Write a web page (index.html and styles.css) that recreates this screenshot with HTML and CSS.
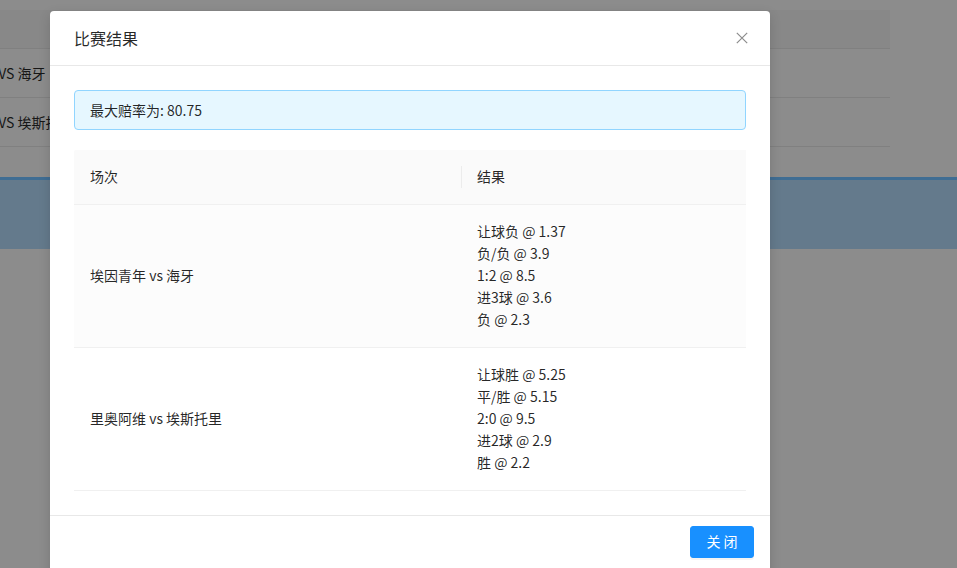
FILE: index.html
```html
<!DOCTYPE html>
<html lang="zh">
<head>
<meta charset="utf-8">
<title>比赛结果</title>
<link rel="stylesheet" href="styles.css">
</head>
<body>
<div class="page">
  <div class="bg-table">
    <div class="bg-row bg-head"><span></span></div>
    <div class="bg-row"><span class="bg-cell">埃因青年 VS 海牙</span></div>
    <div class="bg-row"><span class="bg-cell">里奥阿维 VS 埃斯托里</span></div>
  </div>
  <div class="bg-band"></div>
</div>

<div class="modal">
  <div class="modal-header">
    <div class="modal-title">比赛结果</div>
    <button class="modal-close" aria-label="Close">
      <svg width="12" height="12" viewBox="0 0 12 12"><path d="M0.8 0.8 L11.2 11.2 M11.2 0.8 L0.8 11.2" stroke="#8c8c8c" stroke-width="1.2" fill="none"/></svg>
    </button>
  </div>
  <div class="modal-body">
    <div class="alert">最大赔率为: 80.75</div>
    <table class="result-table">
      <thead>
        <tr><th class="col-match">场次</th><th class="col-result">结果</th></tr>
      </thead>
      <tbody>
        <tr class="hover">
          <td>埃因青年 vs 海牙</td>
          <td><div>让球负 @ 1.37</div><div>负/负 @ 3.9</div><div>1:2 @ 8.5</div><div>进3球 @ 3.6</div><div>负 @ 2.3</div></td>
        </tr>
        <tr>
          <td>里奥阿维 vs 埃斯托里</td>
          <td><div>让球胜 @ 5.25</div><div>平/胜 @ 5.15</div><div>2:0 @ 9.5</div><div>进2球 @ 2.9</div><div>胜 @ 2.2</div></td>
        </tr>
      </tbody>
    </table>
  </div>
  <div class="modal-footer">
    <button class="btn-primary">关 闭</button>
  </div>
</div>
</body>
</html>
```

FILE: styles.css
```css
* { box-sizing: border-box; }
html, body {
  margin: 0;
  padding: 0;
  width: 957px;
  height: 568px;
  overflow: hidden;
  background: #8c8c8c;
  font-family: "Noto Sans CJK SC", "Noto Sans", sans-serif;
  font-size: 14px;
  color: rgba(0, 0, 0, 0.85);
}
.page {
  padding-top: 10px;
}
.bg-table {
  width: 890px;
}
.bg-row {
  height: 49px;
  border-bottom: 1px solid #808080;
  display: flex;
  align-items: center;
  white-space: nowrap;
  color: #161616;
}
.bg-cell {
  margin-left: -61px;
}
.bg-head {
  height: 39px;
  background: #888888;
}
.bg-band {
  margin-top: 30px;
  height: 72px;
  background: #647a8c;
  border-top: 3px solid #3f6d93;
}
.modal {
  position: absolute;
  left: 50px;
  top: 11px;
  width: 720px;
  background: #fff;
  border-radius: 4px 4px 0 0;
  box-shadow: 0 4px 12px rgba(0, 0, 0, 0.15);
}
.modal-header {
  height: 55px;
  padding: 0 24px 1px;
  border-bottom: 1px solid #e8e8e8;
  display: flex;
  align-items: center;
  justify-content: space-between;
}
.modal-title {
  font-size: 16px;
  line-height: 22px;
  color: rgba(0, 0, 0, 0.85);
}
.modal-close {
  border: 0;
  background: none;
  padding: 0;
  width: 12px;
  height: 12px;
  margin-right: -2px;
  display: flex;
}
.modal-body {
  padding: 24px 24px 24px;
}
.alert {
  height: 40px;
  display: flex;
  align-items: center;
  padding: 0 15px 1px;
  background: #e6f7ff;
  border: 1px solid #91d5ff;
  border-radius: 4px;
  line-height: 22px;
  color: rgba(0, 0, 0, 0.85);
}
.result-table {
  margin-top: 20px;
  width: 100%;
  border-collapse: collapse;
  border-spacing: 0;
}
.result-table th {
  background: #fafafa;
  height: 54px;
  padding: 0 16px 1px;
  text-align: left;
  font-weight: normal;
  border-bottom: 1px solid #f0f0f0;
  line-height: 22px;
}
.result-table th.col-match {
  width: 387px;
  border-top-left-radius: 2px;
}
.result-table th.col-result {
  position: relative;
}
.result-table th.col-result::before {
  content: "";
  position: absolute;
  left: 0;
  top: 16px;
  width: 1px;
  height: 22px;
  background: #ececec;
}
.result-table td {
  padding: 15px 16px 17px;
  line-height: 22px;
  border-bottom: 1px solid #f0f0f0;
  vertical-align: middle;
}
.result-table tr.hover td {
  background: #fcfcfc;
}
.modal-footer {
  border-top: 1px solid #e8e8e8;
  padding: 10px 16px;
  display: flex;
  justify-content: flex-end;
  height: 60px;
}
.btn-primary {
  width: 64px;
  height: 32px;
  border: 1px solid #1890ff;
  background: #1890ff;
  color: #fff;
  border-radius: 3px;
  font-family: inherit;
  font-size: 14px;
  line-height: 22px;
  padding: 0 0 1px;
  box-shadow: 0 2px 0 rgba(0, 0, 0, 0.045);
}
```
